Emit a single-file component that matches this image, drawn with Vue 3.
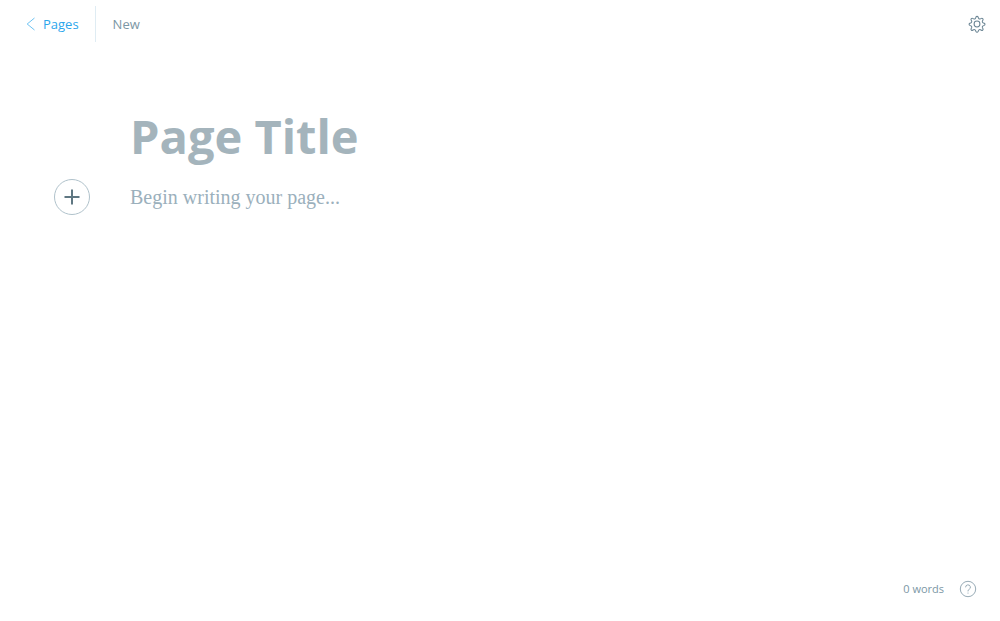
<script setup>
import { ref } from 'vue'

const title = ref('')
const body = ref('')
</script>

<template>
  <div class="editor">
    <header class="topbar">
      <a class="back" href="#pages">
        <svg width="9" height="14" viewBox="0 0 9 14" aria-hidden="true">
          <path d="M8.5 1 L1.2 7 L8.5 13" />
        </svg>
        <span>Pages</span>
      </a>
      <span class="status">New</span>
      <button class="settings" type="button" aria-label="Settings">
        <svg width="18" height="18" viewBox="0 0 26 26" aria-hidden="true">
          <path d="M14.3 3.6l.5 1.4a2.1 2.1 0 0 0 2.9 1.2l1.3-.7a1.7 1.7 0 0 1 2.3 2.3l-.7 1.3a2.1 2.1 0 0 0 1.2 2.9l1.4.5a1.7 1.7 0 0 1 0 3.1l-1.4.5a2.1 2.1 0 0 0-1.2 2.9l.7 1.3a1.7 1.7 0 0 1-2.3 2.3l-1.3-.7a2.1 2.1 0 0 0-2.9 1.2l-.5 1.4a1.7 1.7 0 0 1-3.1 0l-.5-1.4a2.1 2.1 0 0 0-2.9-1.2l-1.3.7a1.7 1.7 0 0 1-2.3-2.3l.7-1.3a2.1 2.1 0 0 0-1.2-2.9l-1.4-.5a1.7 1.7 0 0 1 0-3.1l1.4-.5a2.1 2.1 0 0 0 1.2-2.9l-.7-1.3a1.7 1.7 0 0 1 2.3-2.3l1.3.7a2.1 2.1 0 0 0 2.9-1.2l.5-1.4a1.7 1.7 0 0 1 3.1 0z" transform="translate(.3 -.6)" />
          <circle cx="13" cy="13" r="4.2" />
        </svg>
      </button>
    </header>

    <main class="canvas">
      <textarea v-model="title" class="title" rows="1" placeholder="Page Title" aria-label="Page title"></textarea>
      <div class="row">
        <button class="add" type="button" aria-label="Add a card">
          <svg width="16" height="16" viewBox="0 0 16 16" aria-hidden="true">
            <path d="M8 .5v15M.5 8h15" />
          </svg>
        </button>
        <textarea v-model="body" class="body" rows="1" placeholder="Begin writing your page..." aria-label="Page content"></textarea>
      </div>
    </main>

    <footer class="footer">
      <span>0 words</span>
      <button class="help" type="button" aria-label="Help">
        <svg width="18" height="18" viewBox="0 0 18 18" aria-hidden="true">
          <circle cx="9" cy="9" r="7.7" />
          <path d="M6.6 7.3a2.4 2.4 0 1 1 3.5 2.1c-.8.4-1.1.8-1.1 1.7v.3M9 12.6v1" />
        </svg>
      </button>
    </footer>
  </div>
</template>

<style>
body {
  margin: 0;
  background: #fff;
}
</style>

<style scoped>
.editor {
  display: flex;
  flex-direction: column;
  min-height: 100vh;
  font-family: "Open Sans", "Noto Sans", sans-serif;
  color: #7c97a5;
}
button {
  display: flex;
  align-items: center;
  justify-content: center;
  padding: 0;
  border: 0;
  background: none;
  cursor: pointer;
}
svg {
  display: block;
  fill: none;
}
.topbar {
  display: flex;
  align-items: center;
  height: 36px;
  padding: 6px 14px 6px 26px;
  font-size: 13px;
  line-height: 18px;
}
.back {
  display: flex;
  align-items: center;
  gap: 8px;
  height: 36px;
  padding-right: 16px;
  border-right: 1px solid #dfecf3;
  color: #2ba6ec;
  font-weight: 500;
  text-decoration: none;
}
.back svg {
  stroke: #6cc2f2;
}
.status {
  margin-left: 17px;
}
.settings {
  margin-left: auto;
}
.settings svg {
  stroke: #6b8594;
  stroke-width: 1.5;
}
.canvas {
  flex: 1;
  padding: 61px 130px 0;
}
textarea {
  display: block;
  box-sizing: border-box;
  width: 100%;
  margin: 0;
  padding: 0;
  border: 0;
  outline: 0;
  resize: none;
  overflow: hidden;
  background: transparent;
  color: #394b54;
}
.title {
  height: 56px;
  font: 700 47px/54px "Open Sans", "Noto Sans", sans-serif;
}
.title::placeholder {
  color: #a4b4bc;
}
.row {
  display: flex;
  align-items: center;
  gap: 40px;
  margin: 14px 0 0 -76px;
}
.add {
  box-sizing: border-box;
  flex: none;
  width: 36px;
  height: 36px;
  border: 1px solid #b0c2cb;
  border-radius: 50%;
}
.add svg {
  stroke: #5f7782;
  stroke-width: 2;
}
.body {
  height: 32px;
  font: 20px/32px "Liberation Serif", serif;
}
.body::placeholder {
  color: #9bb0bc;
}
.footer {
  display: flex;
  align-items: center;
  justify-content: flex-end;
  gap: 15px;
  padding: 0 23px 23px;
  font-size: 11px;
  line-height: 18px;
}
.help svg {
  stroke: #98abb6;
}
</style>
